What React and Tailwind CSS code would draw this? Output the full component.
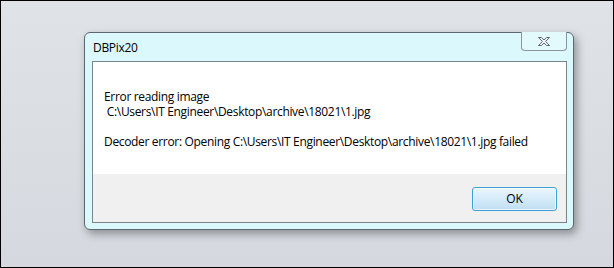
import React from "react";

const CloseGlyph = () => (
  <svg width="14" height="11" viewBox="0 0 14 11">
    <path
      d="M1.5 1.5 L4.5 1.5 L7 4 L9.5 1.5 L12.5 1.5 L8.5 5.5 L12.5 9.5 L9.5 9.5 L7 7 L4.5 9.5 L1.5 9.5 L5.5 5.5 Z"
      fill="#f4f6f8"
      stroke="#5b6670"
      strokeWidth="1"
      strokeLinejoin="round"
    />
  </svg>
);

export default function App() {
  return (
    <div
      className="w-[614px] h-[268px] border border-black bg-gradient-to-b from-[#dfe2e6] to-[#d5d9df] overflow-hidden"
      style={{ fontFamily: '"Open Sans", "Noto Sans", sans-serif' }}
    >
      <div className="ml-[83px] mt-[31px] w-[490px] h-[198px] rounded-[6px] border border-[#5d676f] bg-[#dbf8fc] shadow-[3px_4px_8px_rgba(0,0,0,0.35)] flex flex-col">
        {/* title bar */}
        <div className="h-[28px] flex items-start">
          <div className="pl-[8px] pt-[7px] text-[12px] leading-[15px] tracking-[-0.3px] text-black">
            DBPix20
          </div>
          <div className="ml-auto mr-[6px] w-[46px] h-[19px] -mt-px border border-t-0 border-[#8a949c] rounded-b-[4px] bg-[#e3fafd] flex items-center justify-center">
            <CloseGlyph />
          </div>
        </div>

        {/* body */}
        <div className="ml-[7px] mr-[6px] h-[162px] border border-[#7b848b] flex flex-col">
          <div className="h-[112px] bg-white pl-[11px] pt-[27px] text-[12px] leading-[15px] tracking-[-0.33px] text-black whitespace-pre">
            {"Error reading image\n C:\\Users\\IT Engineer\\Desktop\\archive\\18021\\1.jpg\n\nDecoder error: Opening C:\\Users\\IT Engineer\\Desktop\\archive\\18021\\1.jpg failed"}
          </div>
          <div className="flex-1 bg-[#f0f0f0] flex justify-end items-start pt-[13px] pr-[9px]">
            <button className="w-[85px] h-[24px] rounded-[3px] border border-[#3c9fd8] bg-gradient-to-b from-[#eaf6fd] to-[#c0dff3] shadow-[inset_0_0_0_1px_rgba(255,255,255,0.7)] text-[12px] text-black">
              OK
            </button>
          </div>
        </div>
      </div>
    </div>
  );
}
